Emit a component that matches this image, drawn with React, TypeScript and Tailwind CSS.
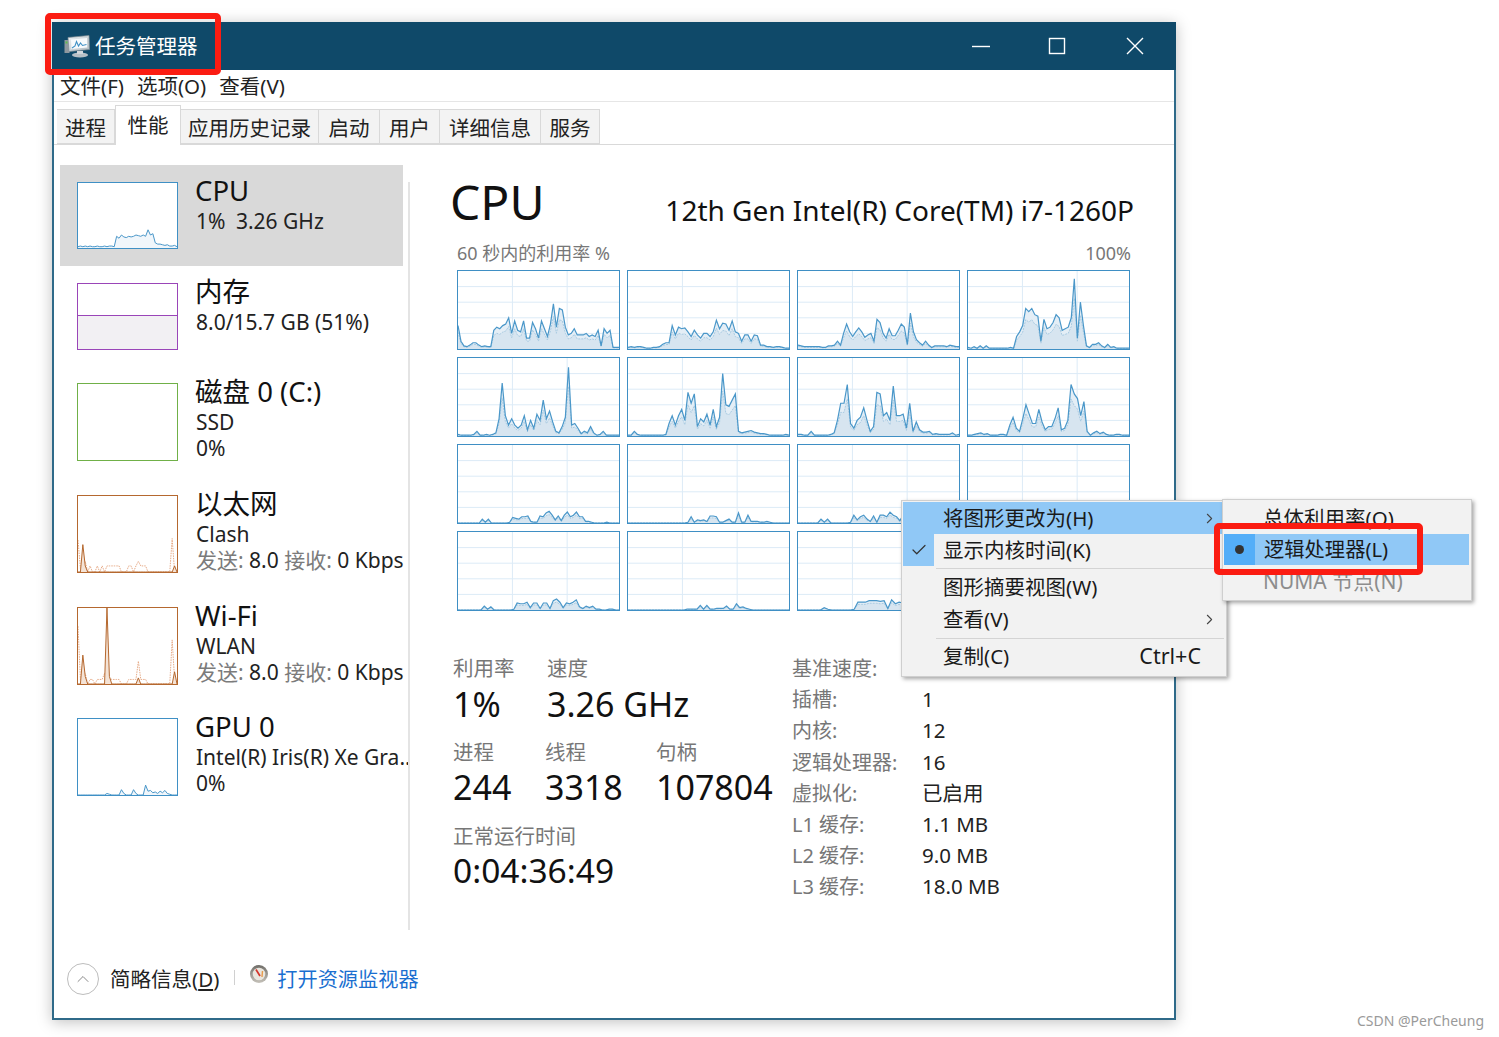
import { Check, ChevronRight, ChevronUp } from "lucide-react"

const FONT = "font-['Noto_Sans','Noto_Sans_CJK_SC',sans-serif]"

// 60 second samples, read off the reference by eye
const CORE_SERIES = [
  [30, 10, 4, 3, 5, 8, 8, 5, 3, 4, 3, 3, 24, 28, 26, 30, 32, 40, 20, 36, 24, 22, 36, 14, 14, 34, 26, 14, 36, 26, 16, 32, 58, 28, 52, 50, 28, 18, 20, 26, 18, 18, 18, 20, 16, 18, 16, 24, 4, 26, 20, 24, 2, 2, 2],
  [2, 3, 2, 3, 3, 2, 1, 1, 2, 2, 3, 6, 8, 8, 30, 18, 28, 26, 27, 22, 16, 24, 18, 14, 20, 20, 16, 22, 37, 26, 33, 32, 24, 36, 22, 20, 10, 18, 18, 10, 18, 17, 5, 5, 3, 3, 2, 3, 3, 2, 1, 1],
  [5, 4, 3, 3, 3, 3, 3, 3, 2, 2, 4, 4, 5, 10, 5, 20, 32, 22, 16, 22, 27, 22, 15, 18, 20, 10, 38, 34, 20, 14, 26, 17, 17, 24, 32, 28, 6, 46, 22, 12, 8, 5, 10, 5, 2, 4, 4, 4, 4, 3, 5, 4, 3, 3],
  [2, 1, 3, 1, 4, 1, 4, 1, 1, 1, 1, 1, 1, 1, 2, 1, 16, 22, 30, 52, 48, 52, 44, 42, 10, 38, 26, 28, 34, 44, 40, 24, 26, 28, 40, 90, 14, 60, 30, 4, 2, 6, 6, 8, 4, 2, 6, 2, 3, 1, 1, 1, 1, 1],
  [2, 1, 1, 1, 1, 2, 6, 1, 1, 2, 1, 2, 4, 22, 68, 26, 14, 22, 14, 10, 14, 26, 8, 20, 10, 28, 20, 46, 22, 32, 18, 6, 4, 12, 24, 88, 14, 16, 10, 3, 6, 4, 12, 4, 1, 2, 6, 1, 1, 1, 1, 1],
  [1, 1, 6, 2, 1, 1, 1, 1, 1, 1, 1, 1, 2, 16, 26, 14, 26, 34, 20, 56, 42, 54, 12, 22, 18, 28, 14, 34, 12, 24, 80, 40, 38, 46, 54, 6, 4, 5, 6, 7, 5, 4, 3, 3, 2, 1, 1, 1, 1, 1, 2, 1],
  [2, 2, 1, 1, 6, 1, 1, 1, 1, 1, 2, 4, 20, 42, 42, 66, 16, 10, 20, 24, 36, 20, 6, 12, 56, 54, 26, 30, 20, 64, 26, 26, 28, 10, 42, 6, 18, 8, 5, 5, 6, 2, 3, 2, 2, 2, 2, 4, 1, 2],
  [1, 1, 2, 3, 4, 2, 3, 1, 1, 1, 2, 2, 1, 14, 24, 10, 6, 22, 40, 28, 16, 16, 34, 18, 8, 12, 12, 22, 36, 8, 10, 20, 66, 54, 48, 26, 44, 6, 1, 4, 6, 3, 5, 2, 1, 1, 2, 2, 1, 1, 1],
  [0, 0, 0, 0, 0, 0, 0, 0, 5, 1, 5, 0, 0, 0, 0, 0, 0, 1, 7, 6, 5, 8, 8, 9, 2, 1, 1, 9, 8, 13, 15, 10, 4, 9, 3, 10, 14, 8, 10, 14, 8, 8, 2, 2, 1, 0, 0, 0, 0, 1, 0, 0, 0, 0],
  [0, 0, 0, 0, 0, 0, 0, 0, 0, 0, 0, 0, 0, 0, 0, 0, 0, 0, 0, 1, 8, 1, 4, 3, 4, 2, 9, 9, 8, 1, 1, 3, 5, 1, 1, 13, 1, 1, 10, 2, 2, 2, 1, 1, 2, 1, 0, 0, 0, 0, 0, 0],
  [0, 0, 0, 0, 0, 0, 0, 5, 1, 5, 0, 0, 0, 0, 0, 0, 1, 10, 4, 8, 10, 5, 2, 9, 1, 10, 10, 8, 14, 10, 8, 3, 10, 12, 14, 10, 5, 6, 5, 4, 3, 2, 1, 1, 0, 0, 0, 0, 0, 0],
  [0, 0, 0, 0, 0, 0, 0, 0, 0, 0, 4, 1, 0, 0, 0, 0, 0, 2, 6, 3, 7, 5, 3, 6, 8, 2, 5, 4, 8, 3, 2, 6, 4, 3, 1, 1, 0, 0, 0, 0, 0, 0, 0, 0, 0, 0],
  [0, 0, 0, 0, 0, 0, 0, 0, 5, 1, 4, 0, 0, 0, 0, 0, 0, 1, 9, 8, 8, 10, 3, 9, 9, 2, 9, 9, 2, 12, 14, 10, 3, 9, 8, 10, 13, 4, 2, 5, 3, 5, 1, 1, 0, 0, 1, 1, 0, 0],
  [0, 0, 0, 0, 0, 0, 0, 0, 0, 0, 0, 0, 0, 0, 0, 0, 0, 0, 1, 1, 1, 1, 6, 1, 6, 1, 1, 2, 2, 2, 5, 1, 1, 8, 3, 4, 2, 1, 0, 0, 0, 0, 0, 0, 0, 0, 0, 0, 0, 0],
  [0, 0, 0, 0, 0, 0, 0, 3, 1, 0, 0, 0, 0, 0, 0, 1, 10, 10, 10, 12, 12, 12, 11, 12, 2, 13, 8, 10, 9, 11, 14, 10, 8, 6, 7, 4, 5, 3, 2, 2, 1, 0, 0, 0],
  [0, 0, 0, 0, 0, 0, 0, 0, 0, 0, 0, 4, 1, 0, 0, 0, 0, 1, 6, 3, 4, 3, 2, 7, 3, 5, 4, 2, 3, 1, 1, 0, 0, 0, 0, 0, 0, 0, 0, 0],
]

const CPU_THUMB = [2, 3, 2, 3, 2, 3, 2, 2, 3, 2, 2, 3, 2, 3, 3, 2, 18, 15, 20, 17, 16, 18, 17, 18, 20, 19, 18, 20, 18, 28, 20, 22, 8, 6, 6, 5, 4, 5, 3, 3, 4, 2]
const GPU_THUMB = [0, 0, 0, 0, 0, 0, 0, 0, 0, 0, 0, 0, 2, 1, 0, 0, 0, 0, 7, 2, 0, 0, 0, 7, 2, 0, 0, 0, 13, 5, 6, 3, 4, 2, 5, 3, 6, 2, 1, 0, 0, 0]
const ETH_TOTAL = [0, 0, 36, 8, 0, 0, 0, 0, 0, 0, 0, 0, 0, 0, 0, 0, 0, 0, 0, 0, 0, 0, 0, 0, 0, 0, 0, 0, 0, 0, 0, 0, 0, 0, 0, 0, 0, 0, 0, 0, 8, 0]
const ETH_DASH = [42, 5, 10, 14, 0, 8, 0, 0, 8, 0, 8, 0, 8, 8, 8, 8, 8, 8, 0, 0, 0, 8, 8, 0, 8, 14, 8, 8, 8, 0, 0, 0, 0, 0, 0, 0, 0, 0, 0, 44, 0, 0]
const WIFI_TOTAL = [0, 0, 38, 10, 0, 0, 0, 0, 0, 0, 0, 0, 100, 10, 0, 0, 0, 0, 0, 0, 0, 0, 0, 0, 0, 8, 0, 0, 0, 0, 0, 0, 0, 0, 0, 0, 0, 0, 0, 0, 16, 0]
const WIFI_DASH = [76, 6, 12, 14, 0, 6, 6, 0, 6, 6, 6, 14, 6, 8, 6, 6, 6, 6, 0, 0, 0, 6, 6, 6, 6, 30, 6, 6, 6, 0, 0, 0, 0, 0, 0, 0, 0, 0, 0, 58, 6, 0]

function toLine(values: number[]) {
  const step = 100 / (values.length - 1)
  return values.map((v, i) => `${(i * step).toFixed(2)},${100 - v}`).join(" ")
}

function toArea(values: number[]) {
  return `0,100 ${toLine(values)} 100,100`
}

function CoreGraph({ values }: { values: number[] }) {
  const kernel = values.map((v) => v * 0.72)
  return (
    <div className="h-[80px] w-[163px] border border-[#3f8fc4] bg-white">
      <svg viewBox="0 0 100 100" preserveAspectRatio="none" className="block h-full w-full">
        {[20, 40, 60, 80].map((y) => (
          <line key={y} x1="0" x2="100" y1={y} y2={y} stroke="#dcebf7" strokeWidth="1" vectorEffect="non-scaling-stroke" />
        ))}
        {[33.8, 67.8].map((x) => (
          <line key={x} x1={x} x2={x} y1="0" y2="100" stroke="#dcebf7" strokeWidth="1" vectorEffect="non-scaling-stroke" />
        ))}
        <polygon points={toArea(values)} fill="#e4eef6" />
        <polygon points={toArea(kernel)} fill="#d7e5f0" />
        <polyline points={toLine(kernel)} fill="none" stroke="#a9cbe2" strokeWidth="1" strokeDasharray="2 1" vectorEffect="non-scaling-stroke" />
        <polyline points={toLine(values)} fill="none" stroke="#4a97c9" strokeWidth="1.2" vectorEffect="non-scaling-stroke" />
      </svg>
    </div>
  )
}

function BlueThumb({ values, height }: { values: number[]; height: string }) {
  return (
    <div className={`w-[101px] border border-[#3f90c5] bg-white ${height}`}>
      <svg viewBox="0 0 100 100" preserveAspectRatio="none" className="block h-full w-full">
        <polygon points={toArea(values)} fill="#f0f6fb" />
        <polyline points={toLine(values)} fill="none" stroke="#4a97c9" strokeWidth="1" vectorEffect="non-scaling-stroke" />
      </svg>
    </div>
  )
}

function NetThumb({ total, dash }: { total: number[]; dash: number[] }) {
  return (
    <div className="h-[78px] w-[101px] border border-[#b5682f] bg-white">
      <svg viewBox="0 0 100 100" preserveAspectRatio="none" className="block h-full w-full">
        <polyline points={toLine(dash)} fill="none" stroke="#e7ab88" strokeWidth="1" strokeDasharray="1.5 1" vectorEffect="non-scaling-stroke" />
        <polygon points={toArea(total)} fill="#f4e3d6" />
        <polyline points={toLine(total)} fill="none" stroke="#b5682f" strokeWidth="1" vectorEffect="non-scaling-stroke" />
      </svg>
    </div>
  )
}

function SidebarItem({
  thumb,
  title,
  lines,
  className,
}: {
  thumb: React.ReactNode
  title: string
  lines: React.ReactNode[]
  className: string
}) {
  return (
    <div className={`flex pl-[17px] pt-[17px] ${className}`}>
      <div className="shrink-0">{thumb}</div>
      <div className="ml-[18px] -mt-[8px] whitespace-nowrap">
        <div className="-ml-[1px] text-[27.5px] leading-[34px] text-[#111]">{title}</div>
        {lines.map((line, i) => (
          <div key={i} className="text-[21px] leading-[26px] text-[#222]">
            {line}
          </div>
        ))}
      </div>
    </div>
  )
}

function NetLine() {
  return (
    <>
      <span className="text-[#7b7b7b]">发送:</span> 8.0 <span className="text-[#7b7b7b]">接收:</span> 0 Kbps
    </>
  )
}

function Tab({ label, active, className }: { label: string; active?: boolean; className: string }) {
  if (active) {
    return (
      <div className={`relative z-10 -mb-px flex h-[40px] items-center justify-center border border-b-0 border-[#d9d9d9] bg-white text-[20.5px] text-[#222] ${className}`}>
        {label}
      </div>
    )
  }
  return (
    <div className={`flex h-[35px] items-center justify-center border border-l-0 border-[#d9d9d9] bg-[#f3f3f3] pt-[3px] text-[20.5px] text-[#222] ${className}`}>
      {label}
    </div>
  )
}

function Stat({ label, value, className, valueSize }: { label: string; value: string; className: string; valueSize?: string }) {
  return (
    <div className={className}>
      <div className="text-[20.5px] leading-[28px] text-[#777]">{label}</div>
      <div className={`text-[#111] ${valueSize ?? "text-[34px] leading-[44px]"}`}>{value}</div>
    </div>
  )
}

function MenuRow({
  label,
  shortcut,
  arrow,
  className,
  left,
}: {
  label: string
  shortcut?: string
  arrow?: boolean
  className?: string
  left?: React.ReactNode
}) {
  return (
    <div className={`flex items-center pr-[8px] text-[#1a1a1a] ${className ?? "text-[20.5px]"}`}>
      <div className="flex h-full w-[40px] shrink-0 items-center">{left}</div>
      <span className="flex-1 whitespace-nowrap">{label}</span>
      {shortcut && <span className="pr-[17px] text-[21.5px]">{shortcut}</span>}
      {arrow && <ChevronRight size={17} strokeWidth={1.5} className="text-[#444]" />}
    </div>
  )
}

function AppIcon() {
  return (
    <svg width="26" height="24" viewBox="0 0 26 24">
      <defs>
        <linearGradient id="screen" x1="0" y1="0" x2="1" y2="1">
          <stop offset="0" stopColor="#eef2f4" />
          <stop offset="1" stopColor="#aeb9c0" />
        </linearGradient>
      </defs>
      <rect x="0.5" y="6" width="5" height="13" fill="#8e999f" />
      <rect x="1.5" y="7.5" width="2" height="2" fill="#5cc04a" />
      <path d="M4 3.5 L25 1.5 L25.5 15.5 L5 17.5 Z" fill="url(#screen)" stroke="#7f8c93" strokeWidth="0.7" />
      <path d="M7 5.5 L23 4 L23.3 13.5 L7.5 15 Z" fill="#f7fafc" />
      <polyline points="8,14 11,12 12.5,7.5 14.5,12 16.5,9 18.5,11.5 22.5,10.5" fill="none" stroke="#3f90c5" strokeWidth="1.1" />
      <ellipse cx="16" cy="21" rx="8" ry="2.5" fill="#b7c0c6" />
      <rect x="13" y="17" width="6" height="3" fill="#d2d8dc" />
    </svg>
  )
}

function MonitorIcon() {
  return (
    <svg width="20" height="20" viewBox="0 0 20 20">
      <defs>
        <linearGradient id="ring" x1="0" y1="0" x2="0" y2="1">
          <stop offset="0" stopColor="#6f6d68" />
          <stop offset="1" stopColor="#c6c2ba" />
        </linearGradient>
      </defs>
      <circle cx="10" cy="10" r="9" fill="url(#ring)" />
      <circle cx="10" cy="10" r="6.3" fill="#e9e6de" />
      <line x1="7" y1="5.5" x2="11" y2="12" stroke="#d2332a" strokeWidth="1.7" />
      <line x1="13.5" y1="7" x2="13" y2="13" stroke="#e89a4a" strokeWidth="1.4" />
    </svg>
  )
}

function TitleBar() {
  return (
    <div className="flex h-[48px] items-center bg-[#0f4969] pl-[12px] text-white">
      <AppIcon />
      <span className="ml-[5px] pt-[1px] text-[20.5px]">任务管理器</span>
      <div className="ml-auto flex items-center text-white">
        <svg width="18" height="18" viewBox="0 0 18 18" className="mr-[58px]">
          <line x1="0" x2="18" y1="9.5" y2="9.5" stroke="#fff" strokeWidth="1.4" />
        </svg>
        <svg width="18" height="18" viewBox="0 0 18 18" className="mr-[60px]">
          <rect x="1.5" y="1.5" width="15" height="15" fill="none" stroke="#fff" strokeWidth="1.4" />
        </svg>
        <svg width="18" height="18" viewBox="0 0 18 18" className="mr-[32px]">
          <path d="M1 1 L17 17 M17 1 L1 17" fill="none" stroke="#fff" strokeWidth="1.4" />
        </svg>
      </div>
    </div>
  )
}

const DETAILS = [
  ["基准速度:", "2.10 GHz"],
  ["插槽:", "1"],
  ["内核:", "12"],
  ["逻辑处理器:", "16"],
  ["虚拟化:", "已启用"],
  ["L1 缓存:", "1.1 MB"],
  ["L2 缓存:", "9.0 MB"],
  ["L3 缓存:", "18.0 MB"],
]

export default function App() {
  return (
    <div className={`relative h-[1037px] w-[1499px] overflow-hidden bg-white pl-[52px] pt-[22px] ${FONT}`}>
      {/* Window */}
      <div className="flex h-[998px] w-[1124px] flex-col border-2 border-t-0 border-[#2f6a89] bg-white shadow-[0_2px_14px_rgba(0,0,0,0.25)]">
        <div className="-mx-[2px] shrink-0">
          <TitleBar />
        </div>

        {/* Menu bar */}
        <div className="flex h-[32px] shrink-0 items-center gap-[13px] border-b border-[#e6e6e6] pl-[6px] pt-[2px] text-[20.5px] text-[#222]">
          <span>文件(F)</span>
          <span>选项(O)</span>
          <span>查看(V)</span>
        </div>

        {/* Tabs */}
        <div className="flex h-[43px] shrink-0 items-end border-b border-[#d9d9d9] pl-[3px]">
          <Tab label="进程" className="w-[58px] border-l" />
          <Tab label="性能" active className="w-[66px]" />
          <Tab label="应用历史记录" className="w-[138px]" />
          <Tab label="启动" className="w-[61px]" />
          <Tab label="用户" className="w-[60px]" />
          <Tab label="详细信息" className="w-[101px]" />
          <Tab label="服务" className="w-[59px]" />
        </div>

        <div className="flex min-h-0 flex-1">
          {/* Sidebar */}
          <div className="w-[354px] shrink-0 pl-[6px] pt-[20px]">
            <SidebarItem
              className="h-[101px] w-[343px] bg-[#d9d9d9]"
              title="CPU"
              lines={["1%\u2002" + "3.26 GHz"]}
              thumb={<BlueThumb values={CPU_THUMB} height="h-[67px]" />}
            />
            <SidebarItem
              className="h-[100px]"
              title="内存"
              lines={["8.0/15.7 GB (51%)"]}
              thumb={
                <div className="flex h-[67px] w-[101px] flex-col border border-[#9a45b8] bg-white">
                  <div className="h-[32px] border-b border-[#9a45b8]" />
                  <div className="flex-1 bg-[#f2f0f3]" />
                </div>
              }
            />
            <SidebarItem
              className="h-[112px]"
              title="磁盘 0 (C:)"
              lines={["SSD", "0%"]}
              thumb={<div className="h-[78px] w-[101px] border border-[#70b048] bg-white" />}
            />
            <SidebarItem
              className="h-[112px]"
              title="以太网"
              lines={["Clash", <NetLine key="net" />]}
              thumb={<NetThumb total={ETH_TOTAL} dash={ETH_DASH} />}
            />
            <SidebarItem
              className="h-[111px]"
              title="Wi-Fi"
              lines={["WLAN", <NetLine key="net" />]}
              thumb={<NetThumb total={WIFI_TOTAL} dash={WIFI_DASH} />}
            />
            <SidebarItem
              className="h-[111px]"
              title="GPU 0"
              lines={["Intel(R) Iris(R) Xe Gra..", "0%"]}
              thumb={<BlueThumb values={GPU_THUMB} height="h-[78px]" />}
            />
          </div>

          {/* Divider */}
          <div className="mt-[37px] h-[748px] w-[2px] shrink-0 bg-[#e4e4e4]" />

          {/* Detail panel */}
          <div className="flex-1 pl-[40px]">
            <div className="flex h-[87px] w-[684px] items-end justify-between">
              <span className="text-[48px] leading-[60px] text-[#111]">CPU</span>
              <span className="pb-[4px] text-[28px] leading-[36px] text-[#111]">12th Gen Intel(R) Core(TM) i7-1260P</span>
            </div>
            <div className="ml-[7px] flex h-[38px] w-[674px] justify-between pt-[7px] text-[18px] leading-[28px] text-[#777]">
              <span>60 秒内的利用率 %</span>
              <span>100%</span>
            </div>
            <div className="ml-[7px] grid w-[673px] grid-cols-4 gap-[7px]">
              {CORE_SERIES.map((values, i) => (
                <CoreGraph key={i} values={values} />
              ))}
            </div>

            <div className="ml-[3px] mt-[43px] flex">
              <div className="w-[339px]">
                <div className="flex">
                  <Stat label="利用率" value="1%" className="w-[94px]" />
                  <Stat label="速度" value="3.26 GHz" className="w-[200px]" />
                </div>
                <div className="mt-[12px] flex">
                  <Stat label="进程" value="244" valueSize="text-[34px] leading-[42px]" className="w-[92px]" />
                  <Stat label="线程" value="3318" valueSize="text-[34px] leading-[42px]" className="w-[111px]" />
                  <Stat label="句柄" value="107804" valueSize="text-[34px] leading-[42px]" className="w-[130px]" />
                </div>
                <Stat label="正常运行时间" value="0:04:36:49" valueSize="text-[33.5px] leading-[40px]" className="mt-[14px]" />
              </div>
              <div className="-mt-[1px] grid grid-cols-[130px_auto] content-start text-[20.5px] leading-[31.2px]">
                {DETAILS.map(([name, value]) => (
                  <div key={name} className="contents">
                    <span className="text-[20px] text-[#777]">{name}</span>
                    <span className="text-[#222]">{value}</span>
                  </div>
                ))}
              </div>
            </div>
          </div>
        </div>

        {/* Footer */}
        <div className="flex h-[88px] shrink-0 items-start pl-[13px] pt-[33px]">
          <div className="flex h-[32px] w-[32px] items-center justify-center rounded-full border border-[#bdbdbd]">
            <ChevronUp size={20} strokeWidth={1.2} className="text-[#8a8a8a]" />
          </div>
          <span className="ml-[11px] mt-[1px] text-[20.5px] text-[#222]">
            简略信息(<span className="underline">D</span>)
          </span>
          <div className="ml-[15px] mt-[7px] h-[15px] w-px bg-[#d0d0d0]" />
          <div className="ml-[14px] mt-[1px]">
            <MonitorIcon />
          </div>
          <span className="ml-[8px] mt-[1px] text-[20.2px] text-[#1a6fd0]">打开资源监视器</span>
        </div>
      </div>

      {/* Context menu */}
      <div className="absolute left-[901px] top-[500px] z-20 h-[177px] w-[326px] border border-[#cfcfcf] bg-[#f2f2f2] shadow-[2px_2px_4px_rgba(0,0,0,0.35)]">
        <div className="pl-[1px] pt-[1px]">
          <MenuRow label="将图形更改为(H)" arrow className="h-[32px] bg-[#90c8f6] text-[20.5px]" />
          <MenuRow
            label="显示内核时间(K)"
            className="h-[32px] text-[20.5px]"
            left={
              <div className="flex h-full w-[31px] items-center justify-center bg-[#90c8f6]">
                <Check size={18} strokeWidth={1.6} className="text-[#333]" />
              </div>
            }
          />
          <div className="ml-[33px] mr-[2px] mt-[2px] h-px bg-[#d4d4d4]" />
          <MenuRow label="图形摘要视图(W)" className="mt-[2px] h-[32px] text-[20.5px]" />
          <MenuRow label="查看(V)" arrow className="h-[32px] text-[20.5px]" />
          <div className="ml-[33px] mr-[2px] mt-[3px] h-px bg-[#d4d4d4]" />
          <MenuRow label="复制(C)" shortcut="Ctrl+C" className="mt-[1px] h-[32px] text-[20.5px]" />
        </div>
      </div>

      {/* Sub menu */}
      <div className="absolute left-[1222px] top-[499px] z-30 h-[102px] w-[250px] border border-[#cfcfcf] bg-[#f2f2f2] pt-[2px] shadow-[2px_2px_4px_rgba(0,0,0,0.35)]">
        <MenuRow label="总体利用率(O)" className="h-[32px] text-[20.5px]" />
        <MenuRow
          label="逻辑处理器(L)"
          className="ml-[1px] mr-[2px] h-[31px] bg-[#90c8f6] text-[20.3px]"
          left={
            <div className="flex h-full w-[31px] items-center justify-center bg-[#54aef8]">
              <div className="h-[9px] w-[9px] rounded-full bg-[#333]" />
            </div>
          }
        />
        <MenuRow label="NUMA 节点(N)" className="h-[33px] text-[21px] !text-[#8d8d8d]" />
      </div>

      {/* Red annotation boxes */}
      <div className="absolute left-[45px] top-[13px] z-40 h-[62px] w-[176px] rounded-[5px] border-[6px] border-[#fb1c12]" />
      <div className="absolute left-[1214px] top-[523px] z-40 h-[52px] w-[209px] rounded-[5px] border-[6px] border-[#fb1c12]" />

      <div className="absolute right-[15px] top-[1010px] text-[14px] text-[#9a9a9a]">CSDN @PerCheung</div>
    </div>
  )
}
